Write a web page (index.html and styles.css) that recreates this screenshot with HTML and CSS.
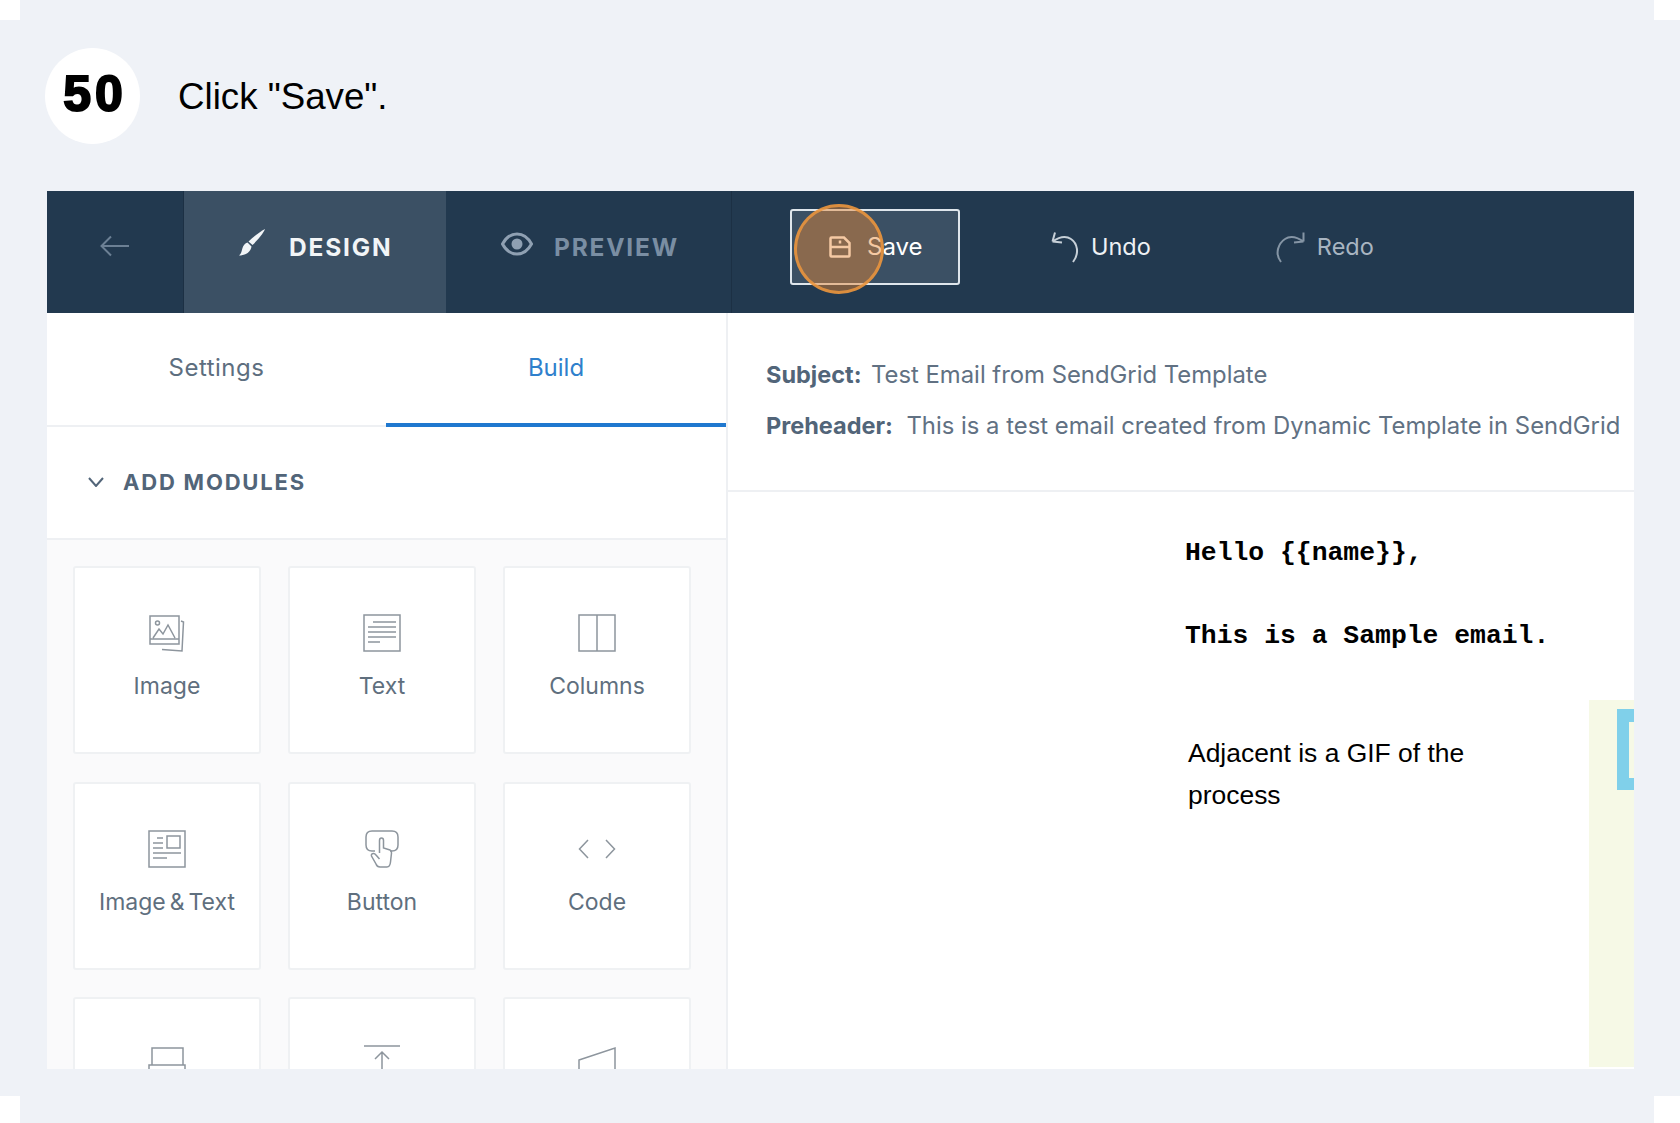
FILE: index.html
```html
<!DOCTYPE html>
<html lang="en">

<head>
    <meta charset="UTF-8">
    <title>Click Save</title>
    <link rel="stylesheet" href="styles.css">
</head>

<body>
    <div class="page">
        <div class="corner corner-tl"></div>
        <div class="corner corner-tr"></div>
        <div class="corner corner-bl"></div>
        <div class="corner corner-br"></div>

        <div class="step">
            <div class="step-num">50</div>
            <div class="step-text">Click "Save".</div>
        </div>

        <div class="editor">
            <div class="topbar">
                <div class="back">
                    <svg width="30" height="22" viewBox="0 0 30 22">
                        <path d="M29 11H2M11 1.500L1.500 11L11 20.500" />
                    </svg>
                </div>
                <div class="mode mode-design">
                    <svg class="brush" width="28" height="28" viewBox="0 0 28 28">
                        <path d="M27 1C25 6 19 12.500 14.500 17L10.500 13.500C15 9 21.500 4 27 1Z" />
                        <path d="M9.500 14.500L13.500 18.500C13 23.500 8 27.500 1 27.500C3.500 25.500 3.500 23.500 4.500 20C5.500 17 7 15.500 9.500 14.500Z" />
                    </svg>
                    <span>DESIGN</span>
                </div>
                <div class="mode mode-preview">
                    <svg width="32" height="24" viewBox="0 0 32 24">
                        <path class="eye-line" d="M1.500 12C5 5.500 10 2 16 2C22 2 27 5.500 30.500 12C27 18.500 22 22 16 22C10 22 5 18.500 1.500 12Z" />
                        <circle class="eye-ball" cx="16" cy="12" r="5.500" />
                    </svg>
                    <span>PREVIEW</span>
                </div>
                <div class="actions">
                    <div class="save">
                        <svg width="22" height="22" viewBox="0 0 22 22">
                            <path d="M1.500 2.500Q1.500 1.500 2.500 1.500H15L20.500 7V19.500Q20.500 20.500 19.500 20.500H2.500Q1.500 20.500 1.500 19.500Z" />
                            <path d="M1.500 11H20.500M11 4.500V7.500" />
                        </svg>
                        <span>Save</span>
                        <div class="highlight"></div>
                    </div>
                    <div class="action undo">
                        <svg width="30" height="32" viewBox="0 0 30 32">
                            <path d="M1.500 10.500C8 6 15 4.500 20 8C26 12 29 22 22 31M1.500 10.500L4 1.500M1.500 10.500L11 11.500" />
                        </svg>
                        <span>Undo</span>
                    </div>
                    <div class="action redo">
                        <svg width="30" height="32" viewBox="0 0 30 32">
                            <path d="M28.500 10.500C22 6 15 4.500 10 8C4 12 -1 22 6 31M28.500 10.500L28.500 1.500M28.500 10.500L19 11.500" />
                        </svg>
                        <span>Redo</span>
                    </div>
                </div>
            </div>

            <div class="workspace">
                <div class="sidebar">
                    <div class="tabs">
                        <div class="tab">Settings</div>
                        <div class="tab tab-active">Build</div>
                    </div>
                    <div class="section-head">
                        <svg width="16" height="10" viewBox="0 0 16 10">
                            <path d="M1 1L8 9L15 1" />
                        </svg>
                        <span>ADD MODULES</span>
                    </div>
                    <div class="modules">
                        <div class="module">
                            <svg class="module-icon" viewBox="0 0 38 38">
                                <rect x="2" y="2" width="29" height="28" />
                                <path d="M2 25H31M5 24L11 15L15 20L20 11L27 24M33 7L35.500 8L34 37L14 35.500" />
                                <circle cx="9.500" cy="9" r="2" />
                            </svg>
                            <div class="module-name">Image</div>
                        </div>
                        <div class="module">
                            <svg class="module-icon" viewBox="0 0 38 38">
                                <rect x="1" y="1" width="36" height="36" />
                                <path d="M10 8H33M5 13H33M5 18H33M5 23H33M5 28H17" />
                            </svg>
                            <div class="module-name">Text</div>
                        </div>
                        <div class="module">
                            <svg class="module-icon" viewBox="0 0 38 38">
                                <rect x="1" y="1" width="36" height="36" />
                                <path d="M19 1V37" />
                            </svg>
                            <div class="module-name">Columns</div>
                        </div>
                        <div class="module">
                            <svg class="module-icon" viewBox="0 0 38 38">
                                <rect x="1" y="1" width="36" height="36" />
                                <rect x="19" y="6" width="13" height="12" />
                                <path d="M9 8H15M5 13H15M5 18H15M5 23H33M5 28H19" />
                            </svg>
                            <div class="module-name">Image &amp; Text</div>
                        </div>
                        <div class="module">
                            <svg class="module-icon" viewBox="0 0 38 38">
                                <path d="M12 21H9Q3 21 3 15V7Q3 1 9 1H29Q35 1 35 7V15Q35 21 29 21H27" />
                                <path d="M16.500 23V10.500Q16.500 8 18.500 8Q20.500 8 20.500 10.500V18L27 20Q28.500 20.500 28.500 23L27.500 32Q27 37 24 37H17Q14 37 13 34L8.500 26Q8 24 10 23.500Q11.500 23 13 25L16.500 29" />
                            </svg>
                            <div class="module-name">Button</div>
                        </div>
                        <div class="module">
                            <svg class="module-icon" viewBox="0 0 38 38">
                                <path d="M10 10L1.500 19L10 28M28 10L36.500 19L28 28" />
                            </svg>
                            <div class="module-name">Code</div>
                        </div>
                        <div class="module">
                            <svg class="module-icon" viewBox="0 0 38 38">
                                <path d="M4 20V3H35V20M1 20H37V38H1Z" />
                            </svg>
                        </div>
                        <div class="module">
                            <svg class="module-icon" viewBox="0 0 38 38">
                                <path d="M1 1H37M19 7V38M12 14L19 7L26 14" />
                            </svg>
                        </div>
                        <div class="module">
                            <svg class="module-icon" viewBox="0 0 38 38">
                                <path d="M1 15L37 3V38L1 25Z" />
                            </svg>
                        </div>
                    </div>
                </div>

                <div class="content">
                    <div class="meta">
                        <p><b>Subject:</b>Test Email from SendGrid Template</p>
                        <p><b>Preheader:</b><span class="wide">This is a test email created from Dynamic Template in SendGrid</span></p>
                    </div>
                    <div class="email">
                        <div class="email-body">
                            <div class="mono mono-first">Hello {{name}},</div>
                            <div class="mono mono-second">This is a Sample email.</div>
                            <p class="adjacent">Adjacent is a GIF of the<br>process</p>
                        </div>
                        <div class="gif">
                            <div class="gif-block">
                                <div class="gif-notch"></div>
                            </div>
                        </div>
                    </div>
                </div>
            </div>
        </div>
    </div>
</body>

</html>
```

FILE: styles.css
```css
* {
    box-sizing: border-box;
}

html,
body {
    margin: 0;
    height: 100%;
}

body {
    background: #fff;
    font-family: Inter, "Liberation Sans", sans-serif;
    overflow: hidden;
}

.page {
    position: relative;
    height: 1123px;
    padding-top: 48px;
    background: #eff2f7;
}

.corner {
    position: absolute;
    background: #fff;
    width: 20px;
    height: 20px;
}

.corner-tl {
    top: 0;
    left: 0;
}

.corner-tr {
    top: 0;
    right: 0;
    width: 26px;
}

.corner-bl {
    bottom: 0;
    left: 0;
    height: 27px;
}

.corner-br {
    bottom: 0;
    right: 0;
    width: 26px;
    height: 27px;
}

/* step title */
.step {
    display: flex;
    align-items: center;
    height: 96px;
    margin-left: 45px;
    gap: 38px;
    color: #000;
    font-family: "Liberation Sans", Arial, sans-serif;
}

.step-num {
    display: flex;
    align-items: center;
    justify-content: center;
    width: 95px;
    height: 96px;
    padding: 0 0 5px 5px;
    border-radius: 50%;
    background: #fff;
    font-size: 50px;
    font-weight: bold;
    letter-spacing: 4px;
    -webkit-text-stroke: 2px #000;
}

.step-text {
    font-size: 36.700px;
    padding-top: 2px;
}

/* editor window */
.editor {
    width: 1587px;
    height: 878px;
    margin: 47px 0 0 47px;
    overflow: hidden;
    background: #fff;
}

.topbar {
    display: flex;
    height: 122px;
    background: #22394f;
}

.back {
    display: flex;
    justify-content: center;
    width: 137px;
    padding: 44px 0 0 0;
    border-right: 1px solid #1c3044;
}

.back svg {
    fill: none;
    stroke: #6c8094;
    stroke-width: 2;
}

.mode {
    display: flex;
    align-items: flex-start;
    font-size: 24.500px;
    font-weight: 700;
    letter-spacing: 1.800px;
}

.mode span {
    line-height: 30px;
    margin-top: 41px;
}

.mode-design {
    width: 262px;
    padding-left: 54px;
    gap: 23px;
    background: #3b5064;
    color: #f2f5f7;
}

.brush {
    margin-top: 37px;
    fill: #f2f5f7;
}

.mode-preview {
    width: 286px;
    padding-left: 55px;
    gap: 21px;
    color: #7a8ea3;
    border-right: 1px solid #1c3044;
}

.mode-preview svg {
    margin-top: 41px;
}

.eye-line {
    fill: none;
    stroke: #8fa0b2;
    stroke-width: 3;
}

.eye-ball {
    fill: #8fa0b2;
}

.actions {
    display: flex;
    align-items: center;
    padding-left: 58px;
    font-size: 23.500px;
    height: 112px;
}

.actions span {
    padding-bottom: 2px;
}

.actions svg {
    fill: none;
    stroke-width: 2;
}

.save {
    position: relative;
    display: flex;
    align-items: center;
    gap: 16px;
    width: 170px;
    height: 76px;
    padding-left: 37px;
    border: 2px solid #dfe6ec;
    border-radius: 3px;
    background: #3b5064;
    color: #fff;
    font-size: 24px;
}

.save svg {
    stroke: #fff;
    stroke-width: 2.500;
}

.highlight {
    position: absolute;
    left: 2px;
    top: -7px;
    width: 90px;
    height: 90px;
    border: 3px solid rgba(236, 150, 62, 0.85);
    border-radius: 50%;
    background: rgba(232, 136, 52, 0.45);
}

.action {
    display: flex;
    align-items: center;
}

.undo {
    gap: 10px;
    margin-left: 91px;
    color: #eef1f4;
}

.undo svg {
    stroke: #c7d0d8;
}

.redo {
    gap: 12px;
    margin-left: 124px;
    color: #a9b5c1;
}

.redo svg {
    stroke: #8595a5;
}

/* left panel */
.workspace {
    display: flex;
    height: 756px;
}

.sidebar {
    width: 681px;
    flex: none;
    border-right: 2px solid #eef0f3;
}

.tabs {
    display: flex;
    height: 114px;
    border-bottom: 2px solid #eef0f3;
    font-size: 24px;
    color: #5d6e7f;
    letter-spacing: 0.500px;
}

.tab {
    display: flex;
    justify-content: center;
    width: 339px;
    padding-top: 40px;
}

.tab-active {
    width: 340px;
    height: 114px;
    color: #2f80cc;
    letter-spacing: 0;
    border-bottom: 4px solid #1f78cf;
}

.section-head {
    display: flex;
    align-items: center;
    gap: 19px;
    height: 113px;
    padding: 0 0 2px 41px;
    border-bottom: 2px solid #eef0f3;
    color: #526579;
    font-size: 22px;
    font-weight: 700;
    letter-spacing: 1.800px;
}

.section-head svg {
    fill: none;
    stroke: #526579;
    stroke-width: 2;
}

.modules {
    display: grid;
    grid-template-columns: repeat(3, 188px);
    grid-auto-rows: 188px;
    column-gap: 27px;
    row-gap: 27.500px;
    height: 541px;
    padding: 26px 0 0 26px;
    background: #fafafb;
}

.module {
    display: flex;
    flex-direction: column;
    align-items: center;
    padding-top: 46px;
    border: 2px solid #eff1f3;
    border-radius: 3px;
    background: #fff;
}

.module-icon {
    width: 38px;
    height: 38px;
    fill: none;
    stroke: #8d959d;
    stroke-width: 1.500;
}

.module-name {
    margin-top: 19px;
    font-size: 23px;
    line-height: 30px;
    word-spacing: -2.500px;
    color: #5f6f7e;
}

/* right panel */
.content {
    flex: 1;
    min-width: 0;
}

.meta {
    height: 179px;
    padding: 47px 0 0 38px;
    border-bottom: 2px solid #eef0f3;
    font-size: 23.850px;
    color: #617183;
}

.meta p {
    margin: 0 0 21px;
    line-height: 30px;
    white-space: nowrap;
}

.meta b {
    margin-right: 9.500px;
    color: #526579;
    font-size: 23.500px;
    font-weight: 700;
}

.meta .wide {
    margin-left: 4px;
}

.email {
    display: flex;
    height: 575px;
}

.email-body {
    flex: 1;
    padding-left: 457px;
    color: #000;
}

.mono {
    font-family: "Liberation Mono", "Courier New", monospace;
    font-size: 26.400px;
    font-weight: bold;
    line-height: 30px;
}

.mono-first {
    margin-top: 46px;
}

.mono-second {
    margin-top: 53px;
}

.adjacent {
    margin: 81px 0 0 3px;
    font-family: "Liberation Sans", Arial, sans-serif;
    font-size: 26.450px;
    line-height: 42px;
}

.gif {
    width: 45px;
    margin-top: 208px;
    padding: 9px 0 0 28px;
    background: #f6f9e6;
}

.gif-block {
    width: 17px;
    height: 81px;
    padding: 13px 0 0 12px;
    background: #80d0ea;
}

.gif-notch {
    width: 5px;
    height: 56px;
    background: #f6f9e6;
}
```
